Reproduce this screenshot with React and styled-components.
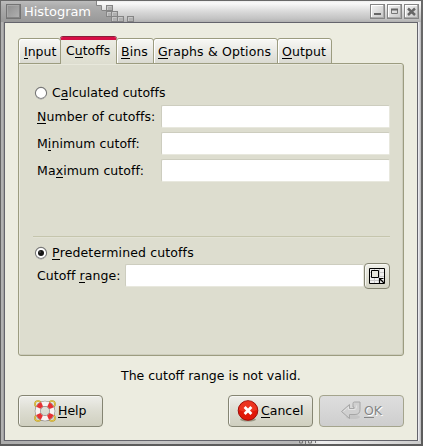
import React from "react";
import styled, { createGlobalStyle, css } from "styled-components";

const Global = createGlobalStyle`
  * { box-sizing: border-box; }
  body { margin: 0; overflow: hidden; }
  u { text-decoration: none; border-bottom: 1px solid currentColor; display: inline-block; line-height: 13px; }
`;

const Window = styled.div`
  width: 423px;
  height: 446px;
  display: flex;
  flex-direction: column;
  font: 12.5px/16px "DejaVu Sans", sans-serif;
  color: #000;
  white-space: nowrap;
  background: linear-gradient(#696969, #5c5c5c);
  padding: 1px 2px 2px 1px;
`;

const TitleBar = styled.header`
  height: 21px;
  flex: none;
  display: flex;
  align-items: center;
  padding: 0 2px 0 5px;
  background: linear-gradient(#ededed 0, #fafafa 2px, #d8d8d8 11px, #c2c2c2 18px, #b0b0b0);
  position: relative;
`;

const TitleShade = styled.svg`
  position: absolute;
  left: 0;
  top: 0;
`;

const MenuBox = styled.span`
  position: relative;
  width: 15px;
  height: 15px;
  border: 1px solid #747474;
  background: linear-gradient(135deg, #8e8e8e, #b2b2b2);
  box-shadow: inset -1px -1px #858585, inset 1px 1px #a8a8a8;
`;

const Title = styled.h1`
  position: relative;
  margin: 0 auto 0 3px;
  font: 13px/18px "DejaVu Sans", sans-serif;
  letter-spacing: -0.05px;
  color: #fff;
`;

const WindowButton = styled.span`
  position: relative;
  width: 15px;
  height: 15px;
  margin-left: 2px;
  border: 1px solid #858585;
  background: linear-gradient(135deg, #f3f3f3, #c6c6c6);
  box-shadow: inset -1px -1px #aaa, inset 1px 1px #fff;
  svg { display: block; }
`;

const Frame = styled.div`
  flex: 1;
  min-height: 0;
  padding: 0 3px;
  background: linear-gradient(90deg, #aaa 0, #b8b8b8 1px, #aaa 2px, #969696 3px, #e4e4e4 3px, #e4e4e4 417px, #f4f4f8 417px, #c9c9cd 419px, #b8b8b8);
`;

const Body = styled.main`
  height: 419px;
  border: 1px solid #64646c;
  background: #ecece0;
  padding: 13px 12px 12px 13px;
  display: flex;
  flex-direction: column;
`;

const BottomEdge = styled.footer`
  height: 3px;
  flex: none;
  display: flex;
  padding-left: 296px;
  background: linear-gradient(90deg, #ababab, #c4c4c4 160px, #b5b5b5 295px, #eee 320px, #ccc);
  svg { display: block; }
`;

const Tabs = styled.nav`
  display: flex;
  align-items: flex-end;
  height: 28px;
  position: relative;
  z-index: 1;
  margin-bottom: -1px;
`;

const Tab = styled.div`
  width: ${(p) => p.$w}px;
  height: 26px;
  margin-right: -1px;
  padding: 5px 0 0 ${(p) => p.$pad || 4}px;
  border: 1px solid #9c9c80;
  border-radius: 3px 3px 0 0;
  background: linear-gradient(#f8f8f5, #dadad2);
  box-shadow: inset 1px 1px #fff;
  letter-spacing: ${(p) => p.$ls || 0}px;
  ${(p) =>
    p.$active &&
    css`
      position: relative;
      height: 27px;
      padding-top: 3px;
      border-bottom: 0;
      border-top: 3px solid #d60f45;
      background: linear-gradient(#ecece3, #ddddcf);
      box-shadow: 0 -1px #87213b;
    `}
`;

const Panel = styled.section`
  height: 293px;
  width: 386px;
  border: 1px solid #9c9c80;
  border-radius: 0 3px 3px 3px;
  background: #ddddcf;
  box-shadow: inset 1px 1px #e8e8dc, inset -1px -1px #cdcdbd;
  padding: 21px 13px 0 14px;
`;

const RadioRow = styled.div`
  display: flex;
  align-items: center;
  height: 16px;
  gap: 4px;
  letter-spacing: ${(p) => p.$ls || 0}px;
  padding-left: 1px;
  svg { flex: none; }
`;

const Field = styled.label`
  display: flex;
  align-items: center;
  height: 23px;
  margin-bottom: 4px;
  padding-left: 4px;
  letter-spacing: ${(p) => p.$ls || 0}px;
`;

const RangeField = styled(Field)`
  margin-top: 3px;
`;

const FieldName = styled.span`
  width: ${(p) => p.$w}px;
  flex: none;
`;

const Entry = styled.input`
  flex: 1;
  min-width: 0;
  height: 23px;
  border: 1px solid;
  border-color: #cdcdbf #e8e8de #e8e8de #cdcdbf;
  border-radius: 2px;
  padding: 0 3px;
  font: inherit;
  outline: 0;
  background: #fff;
`;

const Fields = styled.div`
  padding-top: 4px;
`;

const Rule = styled.hr`
  margin: 54px 0 7px;
  border: 0;
  border-top: 1px solid #c5c5ad;
  border-bottom: 1px solid #e2e2d5;
`;

const PickButton = styled.span`
  width: 26px;
  height: 26px;
  flex: none;
  display: grid;
  place-items: center;
  border: 1px solid #858573;
  border-radius: 4px;
  background: linear-gradient(#efefe9, #d3d3c4);
  box-shadow: inset 1px 1px #f8f8f3;
`;

const Message = styled.p`
  margin: 11px 0 0;
  padding-left: 103px;
  height: 28px;
  line-height: 18px;
`;

const Actions = styled.div`
  display: flex;
  gap: 6px;
  width: 386px;
`;

const Button = styled.button`
  width: 85px;
  height: 32px;
  display: flex;
  align-items: center;
  margin: 0 ${(p) => (p.$push ? "auto" : "0")} 0 0;
  padding: 0 0 0 ${(p) => p.$pad}px;
  gap: 2px;
  border: 1px solid #858573;
  border-radius: 4px;
  background: linear-gradient(#eeeeea, #dcdcd1 50%, #cfcfbf);
  box-shadow: inset 1px 1px #f6f6f2;
  font: inherit;
  color: #000;
  ${(p) =>
    p.$off &&
    css`
      border-color: #a4a48d;
      background: linear-gradient(#dedede, #cecece);
      box-shadow: none;
      color: #858585;
      text-shadow: 1px 1px #fff;
    `}
`;

const Radio = ({ on }) => (
  <svg width="14" height="14" viewBox="0 0 14 14">
    <circle cx="7" cy="7" r="5.6" fill="#fff" stroke="#777" strokeWidth="1.1" />
    <path d="M2.5 10.8A5.6 5.6 0 0 0 11.8 10" fill="none" stroke="#aaa" />
    {on && <circle cx="7" cy="7" r="3" fill="#151515" />}
    {on && <circle cx="6" cy="6" r=".7" fill="#777" />}
  </svg>
);

const Pebble = ({ x, y }) => (
  <g>
    <rect x={x + 0.5} y={y + 0.5} width="6" height="5" fill="#b0b0b0" stroke="#858585" />
    <path d={`M${x + 1.5} ${y + 5}v-3.5h4`} stroke="#c8c8c8" fill="none" />
  </g>
);

const Buoy = () => (
  <svg width="22" height="22" viewBox="0 0 22 22">
    <g fill="none" stroke="#bd9819" strokeWidth="1.6">
      <circle cx="4" cy="4" r="3" /><circle cx="18" cy="4" r="3" />
      <circle cx="4" cy="18" r="3" /><circle cx="18" cy="18" r="3" />
    </g>
    <g fill="none" stroke="#f4dc64" strokeWidth=".6">
      <circle cx="4" cy="4" r="3" /><circle cx="18" cy="4" r="3" />
      <circle cx="4" cy="18" r="3" /><circle cx="18" cy="18" r="3" />
    </g>
    <circle cx="11" cy="11" r="7.3" fill="none" stroke="#8b8585" strokeWidth="6" />
    <circle cx="11" cy="11" r="7.3" fill="none" stroke="#f7f3f1" strokeWidth="4.8" />
    <circle cx="11" cy="11" r="7.3" fill="none" stroke="#e63234" strokeWidth="4.8" strokeDasharray="5.1 6.367" strokeDashoffset="-3.18" />
  </svg>
);

const Stop = () => (
  <svg width="22" height="22" viewBox="0 0 22 22">
    <ellipse cx="11" cy="19.6" rx="8" ry="2" fill="#999985" />
    <circle cx="11" cy="10.5" r="9.8" fill="#e01808" stroke="#9c0c08" />
    <path d="M2 10a9 9 0 0 1 18 0q-9 4-18 0" fill="#f44830" opacity=".6" />
    <path d="M7.6 7.1l6.8 6.8m0-6.8l-6.8 6.8" stroke="#fff" strokeWidth="2.8" />
  </svg>
);

const Enter = () => (
  <svg width="22" height="22" viewBox="0 0 22 22">
    <ellipse cx="13" cy="17" rx="7" ry="2" fill="#c5c5c5" />
    <path d="M1.5 11.5l8-7v4h4.5V7h-1V3.5q0-1.5 1.5-1.5H20v7.5q0 5-5 5H9.5v4z" fill="#d0d0d0" stroke="#a6a6a6" />
    <path d="M3.5 11.5l5-4.5v2.5h6.5q1.5 0 1.5-4" fill="none" stroke="#e4e4e4" />
  </svg>
);

export default function App() {
  return (
    <Window>
      <Global />
      <TitleBar>
        <TitleShade width="150" height="21">
          <defs>
            <linearGradient id="bar" x2="0" y2="1">
              <stop stopColor="#bcbcbc" /><stop offset=".25" stopColor="#adadad" />
              <stop offset="1" stopColor="#989898" />
            </linearGradient>
          </defs>
          <path d="M0 0H95V4H100V10H106V15H111V21H0Z" fill="url(#bar)" />
          <path d="M95.500 0v4.500h5v5h5" fill="none" stroke="#858585" />
          <Pebble x={105} y={4} />
          <Pebble x={105} y={10} /><Pebble x={110} y={10} />
          <Pebble x={110} y={15} /><Pebble x={116} y={15} />
          <Pebble x={126} y={15} />
        </TitleShade>
        <MenuBox />
        <Title>Histogram</Title>
        <WindowButton><svg width="13" height="13"><path d="M3 9h7" stroke="#666" strokeWidth="2" /></svg></WindowButton>
        <WindowButton><svg width="13" height="13"><path d="M3.500 4.500h6v4h-6z" fill="none" stroke="#777" /><path d="M3 4.5h7" stroke="#666" strokeWidth="2" /></svg></WindowButton>
        <WindowButton><svg width="13" height="13"><path d="M3 3.500l7 6.500m0-6.500l-7 6.500" stroke="#666" strokeWidth="2.4" /></svg></WindowButton>
      </TitleBar>
      <Frame>
        <Body>
          <Tabs>
            <Tab $w={43} $pad={5}><u>I</u>nput</Tab>
            <Tab $w={57} $pad={5} $active>C<u>u</u>toffs</Tab>
            <Tab $w={38} $ls={0.1}><u>B</u>ins</Tab>
            <Tab $w={125} $ls={0.15}><u>G</u>raphs &amp; Options</Tab>
            <Tab $w={55} $ls={0.1}><u>O</u>utput</Tab>
          </Tabs>
          <Panel>
            <RadioRow $ls={0.03}><Radio /><span>C<u>a</u>lculated cutoffs</span></RadioRow>
            <Fields>
              <Field $ls={0.07}><FieldName $w={124}><u>N</u>umber of cutoffs:</FieldName><Entry /></Field>
              <Field $ls={0.07}><FieldName $w={124}>M<u>i</u>nimum cutoff:</FieldName><Entry /></Field>
              <Field $ls={0.1}><FieldName $w={124}>Ma<u>x</u>imum cutoff:</FieldName><Entry /></Field>
            </Fields>
            <Rule />
            <RadioRow $ls={0.13}><Radio on /><span><u>P</u>redetermined cutoffs</span></RadioRow>
            <RangeField $ls={0.07}><FieldName $w={88}>Cutoff <u>r</u>ange:</FieldName><Entry />
              <PickButton>
                <svg width="18" height="18" viewBox="0 0 18 18">
                  <path d="M1.500 1.500h15v15h-15z" fill="#f0f0f0" stroke="#000" />
                  <path d="M2 5.5h14M2 9.5h14M2 13.5h14M6.5 2v14M11.5 2v14" stroke="#c8c8c8" />
                  <path d="M3.5 3.500h7v7h-7z" fill="#e4e4dc" stroke="#000" />
                  <path d="M11.500 16v-4.500h4M12 12l4 4" fill="none" stroke="#000" strokeWidth="1.2" />
                </svg>
              </PickButton>
            </RangeField>
          </Panel>
          <Message>The cutoff range is not valid.</Message>
          <Actions>
            <Button $pad={15} $push><Buoy /><span><u>H</u>elp</span></Button>
            <Button $pad={8}><Stop /><span><u>C</u>ancel</span></Button>
            <Button $pad={20} $off><Enter /><span><u>O</u>K</span></Button>
          </Actions>
        </Body>
      </Frame>
      <BottomEdge>
        <svg width="22" height="3"><path d="M2.5 0v2h3V0M8.500 0v3M11.500 0v2h3V0M18.500 0v2" fill="none" stroke="#777" /></svg>
      </BottomEdge>
    </Window>
  );
}
